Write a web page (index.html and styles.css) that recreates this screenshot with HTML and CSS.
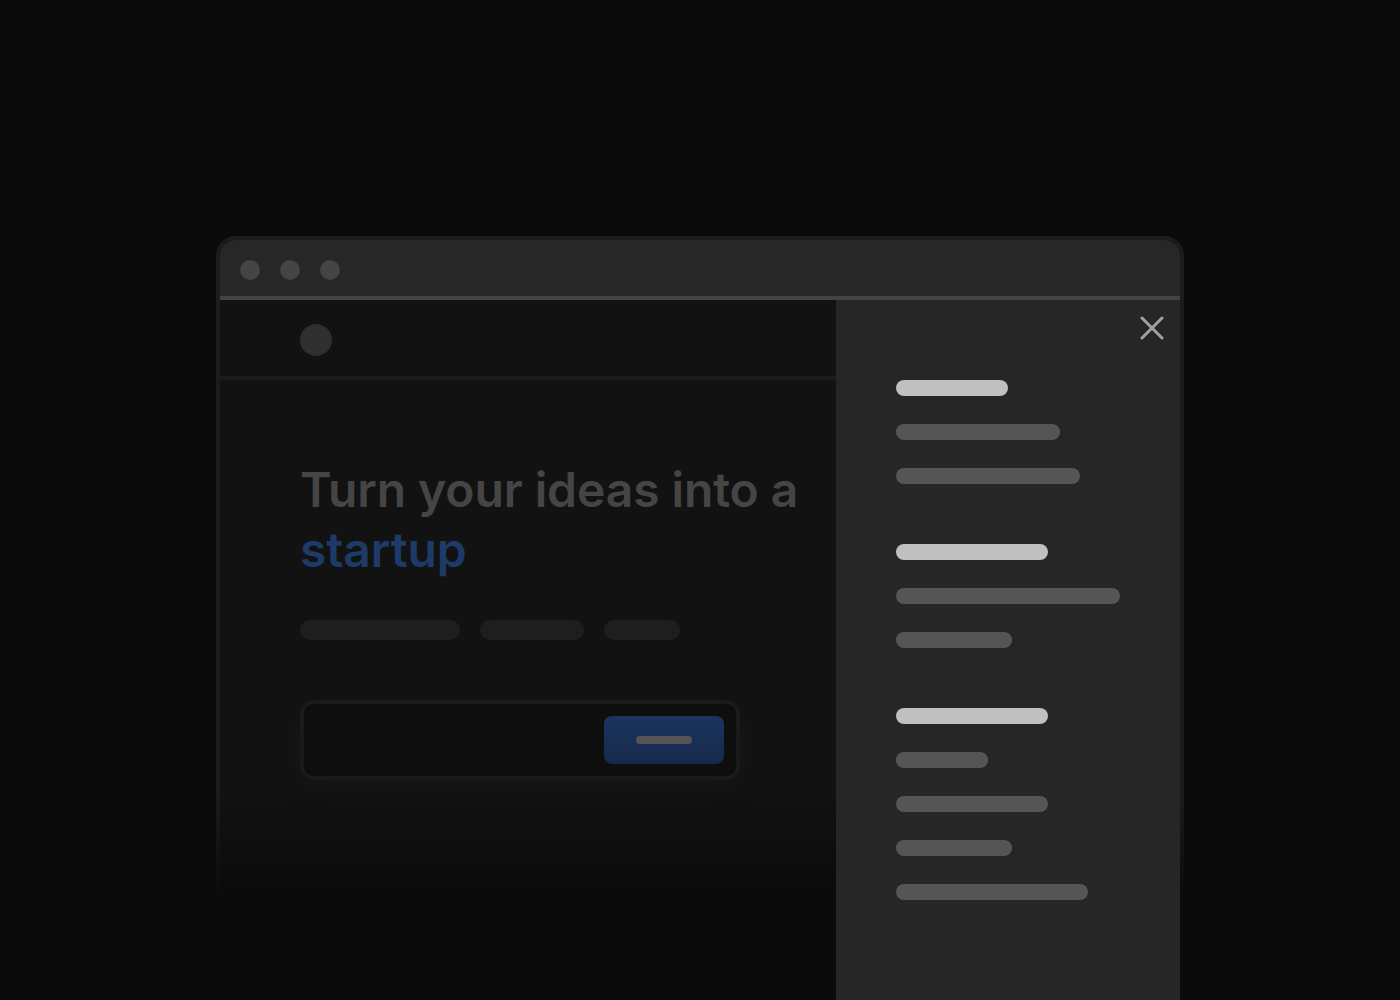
FILE: index.html
```html
<!DOCTYPE html>
<html lang="en">
<head>
<meta charset="utf-8">
<title>Drawer menu</title>
<link rel="stylesheet" href="styles.css">
</head>
<body>
<div class="stage">
  <div class="window">
    <div class="titlebar">
      <span class="dot"></span>
      <span class="dot"></span>
      <span class="dot"></span>
    </div>
    <div class="content">
      <div class="main">
        <div class="nav"><span class="logo"></span></div>
        <div class="hero">
          <h1 class="headline">Turn your ideas into a <span class="accent">startup</span></h1>
          <div class="pills">
            <span class="pill pill-a"></span>
            <span class="pill pill-b"></span>
            <span class="pill pill-c"></span>
          </div>
          <div class="signup">
            <button class="cta" type="button"><span class="cta-bar"></span></button>
          </div>
        </div>
      </div>
      <aside class="drawer">
        <button class="close" type="button" aria-label="Close">
          <svg width="24" height="24" viewBox="0 0 24 24"><path d="M2 2 L22 22 M22 2 L2 22" stroke="#a0a0a0" stroke-width="3" stroke-linecap="round" fill="none"/></svg>
        </button>
        <nav class="menu">
          <div class="group">
            <span class="bar bar-head w112"></span>
            <span class="bar w164"></span>
            <span class="bar w184"></span>
          </div>
          <div class="group">
            <span class="bar bar-head w152"></span>
            <span class="bar w224"></span>
            <span class="bar w116"></span>
          </div>
          <div class="group">
            <span class="bar bar-head w152"></span>
            <span class="bar w92"></span>
            <span class="bar w152"></span>
            <span class="bar w116"></span>
            <span class="bar w192"></span>
          </div>
        </nav>
      </aside>
    </div>
    <div class="fade"></div>
  </div>
</div>
</body>
</html>
```

FILE: styles.css
```css
* { box-sizing: border-box; }

html, body {
  margin: 0;
  padding: 0;
  height: 100%;
  background: #0a0a0a;
  overflow: hidden;
  font-family: Inter, "Noto Sans", sans-serif;
}

.stage {
  padding: 236px 0 0 216px;
}

.window {
  position: relative;
  width: 968px;
  border: 4px solid #1c1c1c;
  border-radius: 20px 20px 0 0;
  background: #121212;
}

.titlebar {
  height: 60px;
  padding: 20px 0 0 20px;
  display: flex;
  gap: 20px;
  background: #272727;
  border-bottom: 4px solid #444444;
  border-radius: 16px 16px 0 0;
}

.dot {
  width: 20px;
  height: 20px;
  border-radius: 50%;
  background: #444444;
}

.content {
  display: grid;
  grid-template-columns: 616px 344px;
  height: 720px;
}

.main {
  background: #121212;
}

.nav {
  height: 80px;
  padding: 24px 0 0 80px;
  border-bottom: 4px solid #1c1c1c;
}

.logo {
  display: block;
  width: 32px;
  height: 32px;
  border-radius: 50%;
  background: #2f2f2f;
}

.hero {
  padding: 80px 0 0 80px;
}

.headline {
  margin: 0;
  font-size: 48px;
  line-height: 60px;
  font-weight: 600;
  letter-spacing: -0.1px;
  color: #454545;
}

.accent {
  color: #1e3a68;
}

.pills {
  display: flex;
  gap: 20px;
  margin-top: 40px;
}

.pill {
  height: 20px;
  border-radius: 10px;
  background: #1e1e1e;
}
.pill-a { width: 160px; }
.pill-b { width: 104px; }
.pill-c { width: 76px; }

.signup {
  margin-top: 60px;
  width: 440px;
  height: 80px;
  padding: 12px 12px 12px 0;
  display: flex;
  justify-content: flex-end;
  background: #0e0e0e;
  border: 4px solid #1a1a1a;
  border-radius: 14px;
  box-shadow: 0 6px 20px 4px rgba(30, 30, 30, 0.35);
}

.cta {
  width: 120px;
  height: 48px;
  border: 0;
  padding: 0;
  border-radius: 8px;
  background: linear-gradient(180deg, #1b3560 0%, #16294b 100%);
  display: flex;
  align-items: center;
  justify-content: center;
}

.cta-bar {
  width: 56px;
  height: 8px;
  border-radius: 4px;
  background: #555555;
}

.drawer {
  position: relative;
  z-index: 2;
  background: #262626;
  padding: 16px 16px 0 60px;
  display: flex;
  flex-direction: column;
}

.close {
  align-self: flex-end;
  width: 24px;
  height: 24px;
  padding: 0;
  border: 0;
  background: none;
  display: block;
}
.close svg { display: block; }

.menu {
  margin-top: 40px;
  display: flex;
  flex-direction: column;
  gap: 60px;
}

.group {
  display: flex;
  flex-direction: column;
  gap: 28px;
}

.bar {
  display: block;
  height: 16px;
  border-radius: 8px;
  background: #555555;
}
.bar-head { background: #c0c0c0; }

.w92 { width: 92px; }
.w112 { width: 112px; }
.w116 { width: 116px; }
.w152 { width: 152px; }
.w164 { width: 164px; }
.w184 { width: 184px; }
.w192 { width: 192px; }
.w224 { width: 224px; }

.fade {
  position: absolute;
  z-index: 1;
  left: -4px;
  right: -4px;
  top: 550px;
  bottom: -4px;
  background: linear-gradient(180deg, rgba(10,10,10,0) 0px, rgba(10,10,10,1) 110px);
  pointer-events: none;
}
```
